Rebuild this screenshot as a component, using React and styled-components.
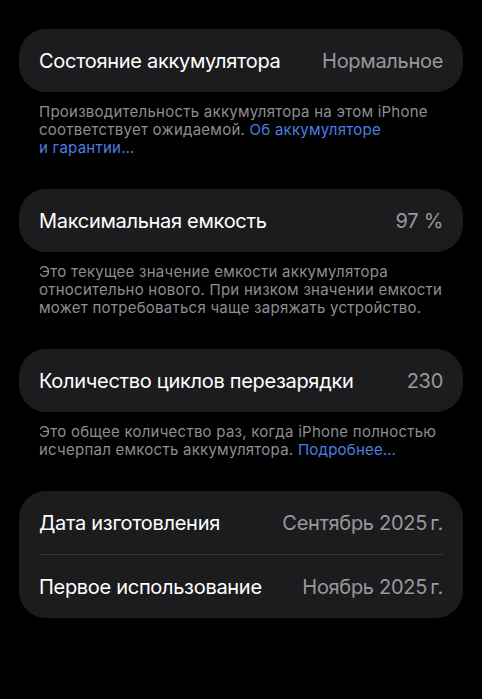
import React from "react";
import styled, { createGlobalStyle } from "styled-components";

const Global = createGlobalStyle`
  html, body { margin: 0; padding: 0; background: #000; }
  body { font-family: Inter, "Noto Sans", "DejaVu Sans", sans-serif; -webkit-font-smoothing: antialiased; }
`;

const Page = styled.div`
  min-height: 699px;
  background: #000;
  padding: 29px 19px 40px;
  box-sizing: border-box;
  display: flex;
  flex-direction: column;
  gap: 32px;
`;

const Section = styled.section`
  display: flex;
  flex-direction: column;
`;

const Card = styled.div`
  background: #1c1c1e;
  border-radius: 27px;
  display: flex;
  flex-direction: column;
`;

const Row = styled.div`
  height: 63px;
  display: flex;
  align-items: center;
  justify-content: space-between;
  padding: 0 20px;
  & + & {
    border-top: 1px solid #38383a;
    margin: 0 20px;
    padding: 0;
  }
`;

const Label = styled.span`
  color: #fff;
  font-size: 20px;
  letter-spacing: -0.3px;
`;

const Value = styled.span`
  color: #98989d;
  font-size: 20px;
  letter-spacing: -0.3px;
`;

const Footer = styled.p`
  margin: 11px 0 0;
  padding: 0 20px;
  color: #8d8d92;
  font-size: 15px;
  line-height: 18px;
  letter-spacing: 0.25px;
`;

const Link = styled.span`
  color: #4a7ee2;
`;

export default function App() {
  return (
    <>
      <Global />
      <Page>
        <Section>
          <Card>
            <Row>
              <Label>Состояние аккумулятора</Label>
              <Value>Нормальное</Value>
            </Row>
          </Card>
          <Footer>
            Производительность аккумулятора на этом iPhone
            <br />
            соответствует ожидаемой. <Link>Об аккумуляторе</Link>
            <br />
            <Link>и гарантии…</Link>
          </Footer>
        </Section>
        <Section>
          <Card>
            <Row>
              <Label>Максимальная емкость</Label>
              <Value>97 %</Value>
            </Row>
          </Card>
          <Footer>
            Это текущее значение емкости аккумулятора
            <br />
            относительно нового. При низком значении емкости
            <br />
            может потребоваться чаще заряжать устройство.
          </Footer>
        </Section>
        <Section>
          <Card>
            <Row>
              <Label>Количество циклов перезарядки</Label>
              <Value>230</Value>
            </Row>
          </Card>
          <Footer>
            Это общее количество раз, когда iPhone полностью
            <br />
            исчерпал емкость аккумулятора. <Link>Подробнее…</Link>
          </Footer>
        </Section>
        <Section>
          <Card>
            <Row>
              <Label>Дата изготовления</Label>
              <Value>Сентябрь 2025{"\u2009"}г.</Value>
            </Row>
            <Row>
              <Label>Первое использование</Label>
              <Value>Ноябрь 2025{"\u2009"}г.</Value>
            </Row>
          </Card>
        </Section>
      </Page>
    </>
  );
}
